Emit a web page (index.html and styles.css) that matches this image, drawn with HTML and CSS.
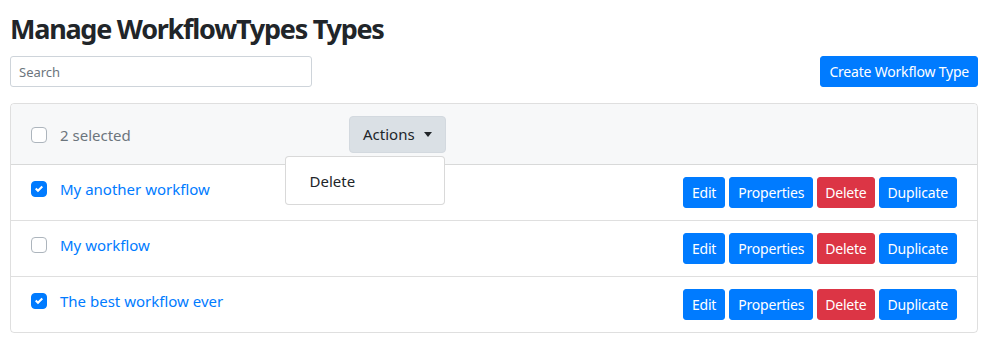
FILE: index.html
```html
<!DOCTYPE html>
<html lang="en">
<head>
    <meta charset="UTF-8">
    <title>Manage WorkflowTypes Types</title>
    <link rel="stylesheet" href="styles.css">
</head>
<body>
    <h1 class="page-title">Manage WorkflowTypes Types</h1>

    <div class="toolbar">
        <input type="text" class="search-input" placeholder="Search">
        <a href="#" class="btn btn-sm btn-primary">Create Workflow Type</a>
    </div>

    <ul class="list-card">
        <li class="list-header">
            <div class="select-all">
                <span class="check"></span>
                <span class="selected-count">2 selected</span>
            </div>
            <div class="actions">
                <button class="btn btn-light">Actions <span class="caret"></span></button>
                <div class="dropdown-menu">
                    <a href="#" class="dropdown-item">Delete</a>
                </div>
            </div>
        </li>
        <li class="list-row">
            <span class="check checked"></span>
            <a href="#" class="row-title">My another workflow</a>
            <div class="row-buttons">
                <a href="#" class="btn btn-sm btn-primary">Edit</a>
                <a href="#" class="btn btn-sm btn-primary">Properties</a>
                <a href="#" class="btn btn-sm btn-danger">Delete</a>
                <a href="#" class="btn btn-sm btn-primary">Duplicate</a>
            </div>
        </li>
        <li class="list-row">
            <span class="check"></span>
            <a href="#" class="row-title">My workflow</a>
            <div class="row-buttons">
                <a href="#" class="btn btn-sm btn-primary">Edit</a>
                <a href="#" class="btn btn-sm btn-primary">Properties</a>
                <a href="#" class="btn btn-sm btn-danger">Delete</a>
                <a href="#" class="btn btn-sm btn-primary">Duplicate</a>
            </div>
        </li>
        <li class="list-row">
            <span class="check checked"></span>
            <a href="#" class="row-title">The best workflow ever</a>
            <div class="row-buttons">
                <a href="#" class="btn btn-sm btn-primary">Edit</a>
                <a href="#" class="btn btn-sm btn-primary">Properties</a>
                <a href="#" class="btn btn-sm btn-danger">Delete</a>
                <a href="#" class="btn btn-sm btn-primary">Duplicate</a>
            </div>
        </li>
    </ul>
</body>
</html>
```

FILE: styles.css
```css
* {
    margin: 0;
    padding: 0;
    box-sizing: border-box;
}

body {
    font-family: "Noto Sans", "Open Sans", sans-serif;
    font-size: 15px;
    line-height: 24px;
    color: #212529;
    background: #fff;
    padding: 10px;
}

a {
    text-decoration: none;
}

.page-title {
    font-size: 27px;
    font-weight: 700;
    line-height: 32px;
    letter-spacing: -1.25px;
    margin: 3px 0 11px;
}

.toolbar {
    display: flex;
    justify-content: space-between;
    align-items: center;
    margin-bottom: 16px;
}

.search-input {
    width: 302px;
    height: 31px;
    padding: 4px 8px;
    font-family: inherit;
    font-size: 13px;
    color: #495057;
    border: 1px solid #ced4da;
    border-radius: 3px;
}

.search-input::placeholder {
    color: #6c757d;
}

.btn {
    display: inline-block;
    font-family: inherit;
    font-size: 15px;
    line-height: 24px;
    padding: 6px 12px;
    border: 1px solid transparent;
    border-radius: 4px;
    color: #fff;
    cursor: pointer;
    white-space: nowrap;
}

.btn-sm {
    font-size: 14px;
    line-height: 21px;
    letter-spacing: -0.2px;
    padding: 4px 8px;
    border-radius: 3px;
}

.btn-primary {
    background: #007bff;
    border-color: #007bff;
}

.btn-danger {
    background: #dc3545;
    border-color: #dc3545;
    padding: 4px 7px;
}

.btn-light {
    height: 37px;
    padding: 5px 13px 6px;
    background: #dae0e5;
    border-color: #d3d9df;
    color: #212529;
}

.caret {
    display: inline-block;
    margin-left: 5px;
    vertical-align: 3px;
    border-top: 5px solid;
    border-left: 4px solid transparent;
    border-right: 4px solid transparent;
}

.list-card {
    list-style: none;
    border: 1px solid rgba(0,0,0,0.125);
    border-radius: 4px;
}

.list-header,
.list-row {
    display: flex;
    padding: 12px 20px;
}

.list-header {
    align-items: center;
    padding-bottom: 11px;
    background: #f7f8f9;
    border-bottom: 1px solid rgba(0,0,0,0.125);
    border-radius: 4px 4px 0 0;
}

.list-row {
    align-items: flex-start;
}

.list-row + .list-row {
    border-top: 1px solid rgba(0,0,0,0.125);
}

.list-row .check {
    margin-top: 4px;
}

.select-all {
    display: flex;
    align-items: center;
    width: 318px;
}

.selected-count {
    color: #6c757d;
}

.check {
    width: 16px;
    height: 16px;
    margin-right: 13px;
    border: 1px solid #adb5bd;
    border-radius: 4px;
    background: #fff;
    flex-shrink: 0;
}

.check.checked {
    background: #007bff url("data:image/svg+xml,%3csvg xmlns='http://www.w3.org/2000/svg' width='8' height='8' viewBox='0 0 8 8'%3e%3cpath fill='%23fff' d='M6.564.75l-3.59 3.612-1.538-1.55L0 4.26l2.974 2.99L8 2.193z'/%3e%3c/svg%3e") no-repeat center / 8px 8px;
    border-color: #007bff;
}

.actions {
    position: relative;
}

.dropdown-menu {
    position: absolute;
    top: 100%;
    right: 1px;
    width: 160px;
    margin-top: 3px;
    padding: 8px 0;
    background: #fff;
    border: 1px solid rgba(0,0,0,0.15);
    border-radius: 4px;
    z-index: 10;
}

.dropdown-item {
    display: block;
    padding: 4px 24px 3px;
    color: #212529;
}

.row-title {
    color: #007bff;
}

.row-buttons {
    margin-left: auto;
    display: flex;
    gap: 4px;
}
```
